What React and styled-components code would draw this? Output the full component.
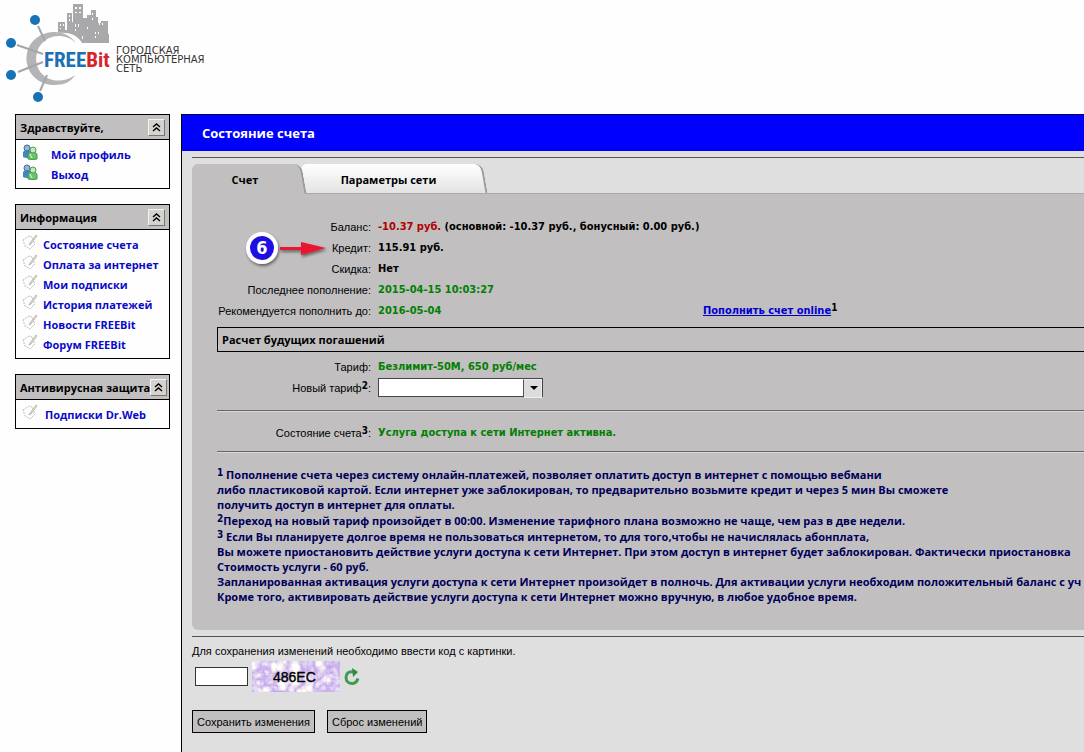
import React from 'react'
import styled, { createGlobalStyle } from 'styled-components'

const bold = '"Open Sans", Tahoma, sans-serif'
const boldWide = '"DejaVu Sans Condensed", Tahoma, sans-serif'
const regular = '"Liberation Sans", Tahoma, sans-serif'

const menus = [
  {
    title: 'Здравствуйте,',
    icon: 'people',
    gap: 13,
    items: ['Мой профиль', 'Выход'],
  },
  {
    title: 'Информация',
    icon: 'note',
    gap: 5,
    items: [
      'Состояние счета',
      'Оплата за интернет',
      'Мои подписки',
      'История платежей',
      'Новости FREEBit',
      'Форум FREEBit',
    ],
  },
  {
    title: 'Антивирусная защита',
    icon: 'note',
    gap: 7,
    items: ['Подписки Dr.Web'],
  },
]

function Logo() {
  return (
    <LogoMark viewBox="0 0 112 106" role="img" aria-label="FREEBit">
      <g fill="#a9a9ac">
        <path d="M58 33V22h7v8h2V13h5v9h1V4h10v14h4v-3h4v-5h5v7h2v6h3v-2h7v13h1v9H82C77 34 68 32 58 33z" />
      </g>
      <g fill="#fff">
        <path d="M60 24h1v2h-1zM63 24h1v2h-1zM60 28h1v1h-1zM69 15h1v2h-1zM69 19h1v2h-1zM75 7h2v2h-2zM79 7h2v2h-2zM75 12h2v1h-2zM79 12h2v1h-2zM75 24h1v3h-1zM78 24h1v3h-1zM75 29h1v2h-1zM92 13h1v2h-1zM92 18h1v2h-1zM99 23h1v2h-1zM102 23h1v2h-1zM95 32h1v2h-1zM98 32h1v2h-1zM95 36h1v2h-1zM87 27h1v2h-1zM82 36h1v3h-1z" />
      </g>
      <path
        d="M76 43C65 27 40 29 30 45c-10 18 2 40 24 40 10 0 17-3 21-10-12 9-29 7-36-5-6-12-2-26 10-32 9-4 20-2 27 5z"
        fill="#b4b4b7"
      />
      <g stroke="#a5a5a9" strokeWidth="2">
        <path d="M38 26l7 15M17 45l26 9M18 72l25-10M40 91l7-16" />
      </g>
      <g fill="#1872b5">
        <circle cx="35" cy="20" r="5" />
        <circle cx="11" cy="43" r="5" />
        <circle cx="11" cy="75" r="5" />
        <circle cx="38" cy="97" r="5" />
      </g>
      <LogoText x="44" y="67">
        <tspan fill="#1c6fb3">FREE</tspan>
        <tspan fill="#d8232a">Bit</tspan>
      </LogoText>
    </LogoMark>
  )
}

function PeopleIcon() {
  return (
    <SmallIcon viewBox="0 0 16 16">
      <path d="M1 13V8q1-2 4-2t4 2v5q-4 2-8 0z" fill="#3f86c4" />
      <circle cx="5" cy="4" r="3" fill="#8fb6d9" stroke="#3c6f9f" />
      <path d="M6 15v-5q1-2 4-2 5 0 5 3v4q-4 1-9 0z" fill="#6fc26a" stroke="#3d9a48" />
      <circle cx="11" cy="6" r="3" fill="#c8e6be" stroke="#4c9c52" />
      <path d="M8 10l2 4" stroke="#e6f5e0" />
    </SmallIcon>
  )
}

function NoteIcon() {
  return (
    <SmallIcon viewBox="0 0 16 16" fill="none">
      <path d="M1 6l6-4 3 1 3 7-5 5-3-2-2-1z" fill="#fdfdfd" stroke="#bdbdbd" strokeDasharray="2 1" />
      <path d="M14 1L8 9l-1 2 2-1 6-8z" fill="#e9e4c4" stroke="#a9a893" strokeWidth="0.7" />
    </SmallIcon>
  )
}

function Menu({ title, icon, gap, items }) {
  return (
    <MenuBox>
      <MenuHead>
        {title}
        <Toggle aria-label="Свернуть">
          <svg width="9" height="9" viewBox="0 0 9 9" fill="none" stroke="#000" strokeWidth="1.4">
            <path d="M1 4l3.500-3L8 4M1 8l3.500-3L8 8" />
          </svg>
        </Toggle>
      </MenuHead>
      <MenuList>
        {items.map((item) => (
          <MenuItem key={item} $gap={gap}>
            {icon === 'people' ? <PeopleIcon /> : <NoteIcon />}
            <a href="#">{item}</a>
          </MenuItem>
        ))}
      </MenuList>
    </MenuBox>
  )
}

function Pointer() {
  return (
    <PointerMark viewBox="0 0 90 42" aria-hidden="true">
      <defs>
        <filter id="shade" x="-20%" y="-20%" width="150%" height="150%">
          <feDropShadow dx="1" dy="2" stdDeviation="1.500" floodColor="#000" floodOpacity="0.5" />
        </filter>
      </defs>
      <g filter="url(#shade)">
        <circle cx="20" cy="20" r="16" fill="#fff" />
        <path d="M38 19h21v-5l25 6-25 7v-5H38z" fill="#e8152f" />
      </g>
      <circle cx="20" cy="20" r="12" fill="#1d0fe2" />
      <PointerText x="20" y="26">6</PointerText>
    </PointerMark>
  )
}

function Captcha() {
  return (
    <CaptchaImage viewBox="0 0 88 31" role="img" aria-label="486EC">
      <filter id="marble" x="0" y="0" width="100%" height="100%" colorInterpolationFilters="sRGB">
        <feTurbulence type="turbulence" baseFrequency="0.08" numOctaves="3" seed="4" />
        <feColorMatrix values="0.5 0 0 0 0.74  0.7 0 0 0 0.62  0.1 0 0 0 0.92  0 0 0 0 1" />
      </filter>
      <rect width="88" height="31" filter="url(#marble)" />
      <CaptchaText x="21" y="21">486EC</CaptchaText>
    </CaptchaImage>
  )
}

function App() {
  return (
    <Page>
      <GlobalStyle />
      <Header>
        <Logo />
        <Tagline>
          ГОРОДСКАЯ
          <br />
          КОМПЬЮТЕРНАЯ
          <br />
          СЕТЬ
        </Tagline>
      </Header>
      <Columns>
        <Sidebar>
          {menus.map((menu) => (
            <Menu key={menu.title} {...menu} />
          ))}
        </Sidebar>
        <Main>
          <MainTitle>Состояние счета</MainTitle>
          <MainBody>
            <Rule />
            <Tabs role="tablist">
              <Tab role="tab" aria-selected="true" $active>
                <span>Счет</span>
              </Tab>
              <Tab role="tab" aria-selected="false">
                <span>Параметры сети</span>
              </Tab>
            </Tabs>
            <Panel>
              <Pointer />
              <Row>
                <Label as="span">Баланс:</Label>
                <Value>
                  <Value $color="#b00000">-10.37 руб.</Value> (основной: -10.37 руб., бонусный: 0.00 руб.)
                </Value>
              </Row>
              <Row>
                <Label as="span">Кредит:</Label>
                <Value>115.91 руб.</Value>
              </Row>
              <Row>
                <Label as="span">Скидка:</Label>
                <Value>Нет</Value>
              </Row>
              <Row>
                <Label as="span">Последнее пополнение:</Label>
                <Value $color="#008000">2015-04-15 10:03:27</Value>
              </Row>
              <Row>
                <Label as="span">Рекомендуется пополнить до:</Label>
                <Value $color="#008000">2016-05-04</Value>
                <Value>
                  <PayLink href="#">Пополнить счет online</PayLink>
                  <Sup>1</Sup>
                </Value>
              </Row>
              <Section>Расчет будущих погашений</Section>
              <Row>
                <Label as="span">Тариф:</Label>
                <Value $color="#008000">Безлимит-50М, 650 руб/мес</Value>
              </Row>
              <Row>
                <Label htmlFor="tariff">
                  Новый тариф<Sup>2</Sup>:
                </Label>
                <SelectBox>
                  <Select id="tariff" />
                </SelectBox>
              </Row>
              <Groove $top={12} $bottom={10} />
              <Row>
                <Label as="span">
                  Состояние счета<Sup>3</Sup>:
                </Label>
                <Value $color="#008000">Услуга доступа к сети Интернет активна.</Value>
              </Row>
              <Groove $top={8} $bottom={14} />
              <Note>
                <Sup>1</Sup> Пополнение счета через систему онлайн-платежей, позволяет оплатить доступ в интернет с помощью вебмани
                <br />
                либо пластиковой картой. Если интернет уже заблокирован, то предварительно возьмите кредит и через 5 мин Вы сможете
                <br />
                получить доступ в интернет для оплаты.
              </Note>
              <Note>
                <Sup>2</Sup>Переход на новый тариф произойдет в 00:00. Изменение тарифного плана возможно не чаще, чем раз в две недели.
              </Note>
              <Note>
                <Sup>3</Sup> Если Вы планируете долгое время не пользоваться интернетом, то для того,чтобы не начислялась абонплата,
                <br />
                Вы можете приостановить действие услуги доступа к сети Интернет. При этом доступ в интернет будет заблокирован. Фактически приостановка
                <br />
                Стоимость услуги - 60 руб.
                <br />
                Запланированная активация услуги доступа к сети Интернет произойдет в полночь. Для активации услуги необходим положительный баланс с уч
                <br />
                Кроме того, активировать действие услуги доступа к сети Интернет можно вручную, в любое удобное время.
              </Note>
            </Panel>
            <Rule />
            <CodeLabel htmlFor="code">Для сохранения изменений необходимо ввести код с картинки.</CodeLabel>
            <CodeRow>
              <CodeInput id="code" type="text" />
              <Captcha />
              <Refresh aria-label="Обновить код">
                <svg width="16" height="18" viewBox="0 0 16 18" fill="none">
                  <path d="M9 4C4 3 2 6 2 9.500c0 4 3 6 6 6s5-2 6-5" stroke="#3c9d50" strokeWidth="3" />
                  <path d="M8 0l6 4-5 5z" fill="#2f8a44" />
                </svg>
              </Refresh>
            </CodeRow>
            <Actions>
              <Button>Сохранить изменения</Button>
              <Button>Сброс изменений</Button>
            </Actions>
          </MainBody>
        </Main>
      </Columns>
    </Page>
  )
}

const GlobalStyle = createGlobalStyle`
  * {
    box-sizing: border-box;
  }
  body {
    margin: 0;
    background: #fefefe;
    color: #000;
    font-family: ${regular};
    font-size: 11px;
  }
  button, input, select {
    font: inherit;
    color: inherit;
    padding: 0;
    margin: 0;
  }
`

const Page = styled.div`
  display: flex;
  flex-direction: column;
  min-height: 100vh;
  overflow: hidden;
`

const Header = styled.header`
  display: flex;
  gap: 4px;
  height: 114px;
`

const LogoMark = styled.svg`
  width: 112px;
  height: 106px;
`

const LogoText = styled.text`
  font-family: 'Liberation Sans Narrow', 'Roboto Condensed', 'DejaVu Sans Condensed', sans-serif;
  font-size: 21px;
  font-weight: 700;
  stroke: #fff;
  stroke-width: 2px;
  paint-order: stroke;
`

const Tagline = styled.p`
  margin: 46px 0 0;
  font-family: 'DejaVu Sans', sans-serif;
  font-size: 10px;
  line-height: 9px;
  color: #333;
`

const Columns = styled.div`
  display: flex;
  flex: 1;
  gap: 11px;
  padding-left: 15px;
`

const Sidebar = styled.nav`
  display: flex;
  flex-direction: column;
  flex: none;
  gap: 15px;
  width: 155px;
`

const MenuBox = styled.section`
  border: 1px solid #000;
`

const MenuHead = styled.h2`
  display: flex;
  align-items: center;
  justify-content: space-between;
  height: 25px;
  margin: 0;
  padding: 0 4px;
  border-bottom: 1px solid #000;
  background: #c1bfc0;
  font: 700 11px ${bold};
  white-space: nowrap;
`

const Toggle = styled.button`
  display: flex;
  flex: none;
  align-items: center;
  justify-content: center;
  width: 17px;
  height: 17px;
  border: 1px solid;
  border-color: #f4f4f4 #777 #777 #f4f4f4;
  background: #d6d3ce;
`

const MenuList = styled.ul`
  margin: 0;
  padding: 4px 0 4px 6px;
  list-style: none;
`

const MenuItem = styled.li`
  display: flex;
  align-items: center;
  gap: ${(props) => props.$gap}px;
  height: 20px;
  font: 700 11px ${bold};
  white-space: nowrap;

  a {
    color: #0a0ac8;
    text-decoration: none;
  }
`

const SmallIcon = styled.svg`
  flex: none;
  width: 16px;
  height: 16px;
  margin-bottom: 4px;
`

const Main = styled.main`
  flex: 1;
  min-width: 0;
  border-left: 1px solid #000;
  background: #e0dfe0;
`

const MainTitle = styled.h1`
  height: 37px;
  margin: 0;
  padding-left: 20px;
  border-top: 1px solid #000060;
  background: #0000fe;
  color: #fff;
  font: 700 13px/36px ${bold};
`

const MainBody = styled.div`
  padding: 6px 0 18px 10px;
`

const Rule = styled.hr`
  height: 1px;
  margin: 0 0 6px;
  border: 0;
  background: #555;
`

const Tabs = styled.div`
  display: flex;
`

const Tab = styled.button`
  position: relative;
  z-index: ${(props) => (props.$active ? 2 : 1)};
  width: ${(props) => (props.$active ? 112 : 181)}px;
  height: 30px;
  margin-bottom: -1px;
  padding-right: ${(props) => (props.$active ? 6 : 12)}px;
  border: 0;
  background: none;
  font: 700 11px ${bold};

  span {
    position: relative;
    z-index: 1;
  }

  &::before,
  &::after {
    content: '';
    position: absolute;
    top: 0;
    bottom: ${(props) => (props.$active ? 0 : 1)}px;
    background: ${(props) => (props.$active ? '#c1bfc0' : 'linear-gradient(#fff, #e4e3e4)')};
  }

  &::before {
    left: ${(props) => (props.$active ? 0 : -3)}px;
    right: 50%;
    border-top-left-radius: 6px;
  }

  &::after {
    left: 40%;
    right: 0;
    border-right: 2px solid #999;
    border-top-right-radius: 8px;
    transform: skewX(10deg);
  }
`

const Panel = styled.section`
  position: relative;
  margin-bottom: 6px;
  padding: 22px 0 25px 25px;
  border-top: 1px solid #aaa;
  border-radius: 0 0 0 6px;
  background: #c1bfc0;
`

const PointerMark = styled.svg`
  position: absolute;
  top: 34px;
  left: 50px;
  width: 90px;
  height: 42px;
`

const PointerText = styled.text`
  font: 700 18px ${boldWide};
  fill: #fff;
  text-anchor: middle;
`

const Row = styled.div`
  display: grid;
  grid-template-columns: 154px 318px auto;
  align-items: center;
  gap: 7px;
  height: 21px;
  white-space: nowrap;
`

const Label = styled.label`
  text-align: right;
`

const Value = styled.span`
  color: ${(props) => props.$color || '#000'};
  font: 700 11px ${boldWide};
`

const Sup = styled.sup`
  font: 700 10px/1 ${boldWide};
  line-height: 0;
  vertical-align: 3px;
`

const PayLink = styled.a`
  color: #0000d0;
`

const Section = styled.h2`
  height: 25px;
  margin: 6px 0 4px;
  padding-left: 4px;
  border: 1px solid #000;
  border-right: 0;
  font: 700 11px/24px ${bold};
`

const SelectBox = styled.span`
  position: relative;
  width: 165px;
  height: 19px;

  &::before {
    content: '';
    position: absolute;
    top: 1px;
    right: 1px;
    width: 17px;
    height: 17px;
    border: 1px solid #eee;
    border-left-color: #555;
    background: #dcdcdf;
    pointer-events: none;
  }

  &::after {
    content: '';
    position: absolute;
    top: 8px;
    right: 5px;
    border: 4px solid transparent;
    border-top-color: #000;
    border-bottom: 0;
    pointer-events: none;
  }
`

const Select = styled.select`
  display: block;
  width: 100%;
  height: 100%;
  border: 1px solid #444;
  border-radius: 0;
  background: #fff;
  appearance: none;
`

const Groove = styled.hr`
  height: 2px;
  margin: ${(props) => props.$top}px 0 ${(props) => props.$bottom}px;
  border: 0;
  border-top: 1px solid #666;
  border-bottom: 1px solid #d8d8d8;
`

const Note = styled.p`
  margin: 0 0 1px;
  color: #00005a;
  font: 700 11px/15px ${bold};
  white-space: nowrap;
`

const CodeLabel = styled.label`
  display: block;
  margin-top: 7px;
  line-height: 15px;
`

const CodeRow = styled.div`
  display: flex;
  align-items: center;
  gap: 4px;
  margin: 2px 0 18px;
  padding-left: 3px;
`

const CodeInput = styled.input`
  width: 53px;
  height: 19px;
  border: 1px solid #333;
  background: #fff;
`

const CaptchaImage = styled.svg`
  width: 88px;
  height: 31px;
`

const CaptchaText = styled.text`
  font: 14px 'Liberation Sans', sans-serif;
  fill: #000;
  stroke: #000;
  stroke-width: 0.4px;
`

const Refresh = styled.button`
  display: flex;
  border: 0;
  background: none;
`

const Actions = styled.div`
  display: flex;
  gap: 12px;
`

const Button = styled.button`
  height: 23px;
  padding: 0 4px;
  border: 1px solid #000;
  background: #c1bfc0;
`

export default App
